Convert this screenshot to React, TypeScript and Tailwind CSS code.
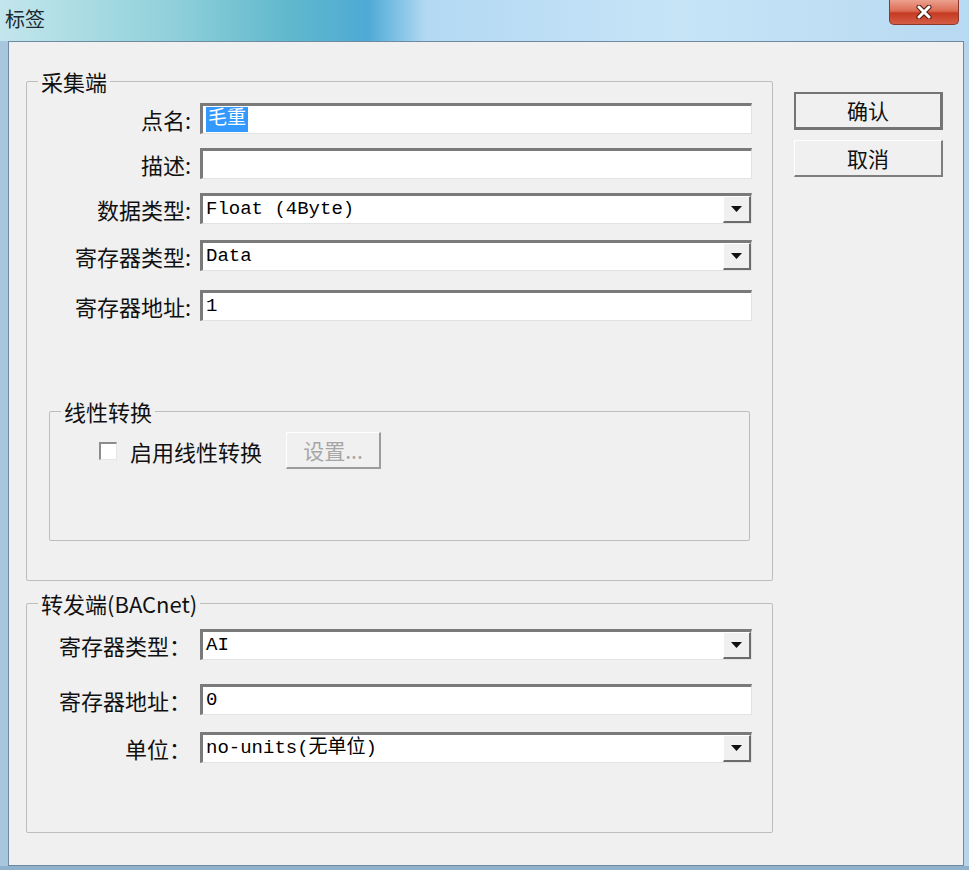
import type { ReactNode } from 'react';

type FieldProps = {
  label: string;
  value?: string;
  combo?: boolean;
  selected?: boolean;
  gap: string;
};

function DropArrow() {
  return (
    <div className="flex w-[28px] shrink-0 items-center justify-center self-stretch border-t border-l border-t-white border-l-white border-r-2 border-b-2 border-r-[#6c6c6c] border-b-[#6c6c6c] bg-[#f0f0f0]">
      <svg width="11" height="6" viewBox="0 0 11 6">
        <path d="M0 0 H11 L5.5 6 Z" fill="#111" />
      </svg>
    </div>
  );
}

function Field({ label, value, combo, selected, gap }: FieldProps) {
  return (
    <div className={`flex items-center ${gap}`}>
      <div className="w-[164px] shrink-0 text-right text-[22px] leading-none text-[#111]">{label}</div>
      <div className="ml-[9px] flex h-[31px] w-[552px] items-stretch border-t-[3px] border-l-[3px] border-r border-b border-t-[#7a7a7a] border-l-[#7a7a7a] border-r-[#e2e2e2] border-b-[#e2e2e2] bg-white">
        <div className="flex flex-1 items-center pl-[3px] font-['Liberation_Mono','Noto_Sans_CJK_SC',monospace] text-[19px] leading-none text-black">
          {selected ? <span className="bg-[#3399ff] px-[2px] py-[3px] text-white">{value}</span> : value}
        </div>
        {combo && <DropArrow />}
      </div>
    </div>
  );
}

function Group({ title, className, children }: { title: string; className: string; children: ReactNode }) {
  return (
    <fieldset className={`rounded-[2px] border border-[#bdbdbd] ${className}`}>
      <legend className="ml-[11px] px-[3px] text-[22px] leading-[26px] text-[#111]">{title}</legend>
      {children}
    </fieldset>
  );
}

export default function App() {
  return (
    <div className="flex h-[870px] w-[969px] flex-col overflow-hidden bg-[linear-gradient(90deg,#c3e6ec_0%,#8fd0da_18%,#5fb8cc_30%,#4eaad6_38%,#b3d9f3_44%,#c7e4f7_70%,#b7d9f1_100%)] font-['Noto_Sans_CJK_SC','Liberation_Sans',sans-serif]">
      {/* title bar */}
      <div className="flex h-[41px] shrink-0 items-start justify-between">
        <div className="pl-[5px] pt-[6px] text-[20px] leading-[26px] text-[#1d2a33]">标签</div>
        <div className="mr-[10px] flex h-[25px] w-[70px] items-center justify-center rounded-b-[5px] border border-t-0 border-[#8a3a2c] bg-[linear-gradient(180deg,#eba08e_0%,#dc6d55_45%,#c63a22_55%,#d45e45_100%)]">
          <svg width="16" height="14" viewBox="0 0 16 14">
            <path d="M3 2 L13 12 M13 2 L3 12" stroke="#4a1a12" strokeWidth="5" strokeLinecap="round" />
            <path d="M3 2 L13 12 M13 2 L3 12" stroke="#fff" strokeWidth="3" strokeLinecap="round" />
          </svg>
        </div>
      </div>

      <div className="flex flex-1">
        <div className="w-[8px] shrink-0 bg-[#a8c7de]" />
        {/* client area */}
        <div className="flex flex-1 items-start border border-[#6f8aa0] bg-[#f0f0f0] pl-[17px] pt-[26px]">
          <div className="flex w-[747px] flex-col">
            <Group title="采集端" className="h-[513px]">
              <Field label="点名:" value="毛重" selected gap="mt-[9px]" />
              <Field label="描述:" gap="mt-[14px]" />
              <Field label="数据类型:" value="Float (4Byte)" combo gap="mt-[14px]" />
              <Field label="寄存器类型:" value="Data" combo gap="mt-[16px]" />
              <Field label="寄存器地址:" value="1" gap="mt-[19px]" />

              <fieldset className="mx-[22px] mt-[77px] h-[143px] rounded-[2px] border border-[#bdbdbd]">
                <legend className="ml-[11px] px-[3px] text-[22px] leading-[26px] text-[#111]">线性转换</legend>
                <div className="mt-[8px] flex items-center pl-[49px]">
                  <div className="h-[18px] w-[18px] border-t-2 border-l-2 border-r border-b border-t-[#8c8c8c] border-l-[#8c8c8c] border-r-[#e6e6e6] border-b-[#e6e6e6] bg-white" />
                  <span className="ml-[13px] text-[22px] leading-none text-[#111]">启用线性转换</span>
                  <div className="ml-[24px] flex h-[37px] w-[95px] items-center justify-center border-t border-l border-t-white border-l-white border-r-2 border-b-2 border-r-[#9c9c9c] border-b-[#9c9c9c] text-[21px] leading-none text-[#a6a6a6]">
                    设置...
                  </div>
                </div>
              </fieldset>
            </Group>

            <Group title="转发端(BACnet)" className="mt-[9px] h-[243px]">
              <Field label="寄存器类型：" value="AI" combo gap="mt-[13px]" />
              <Field label="寄存器地址：" value="0" gap="mt-[24px]" />
              <Field label="单位：" value="no-units(无单位)" combo gap="mt-[17px]" />
            </Group>
          </div>

          <div className="-mt-[2px] ml-[21px] flex flex-col pt-[26px]">
            <button className="flex h-[38px] w-[149px] items-center justify-center border-2 border-r-[3px] border-b-[3px] border-[#747474] bg-[#f0f0f0] text-[21px] leading-none text-[#111]">
              确认
            </button>
            <button className="mt-[10px] flex h-[37px] w-[149px] items-center justify-center border-t border-l border-t-white border-l-white border-r-2 border-b-2 border-r-[#7e7e7e] border-b-[#7e7e7e] bg-[#f0f0f0] text-[21px] leading-none text-[#111]">
              取消
            </button>
          </div>
        </div>
        <div className="w-[5px] shrink-0 bg-[#b6d5ec]" />
      </div>
      <div className="h-[4px] shrink-0 bg-[#8fb1cc]" />
    </div>
  );
}
